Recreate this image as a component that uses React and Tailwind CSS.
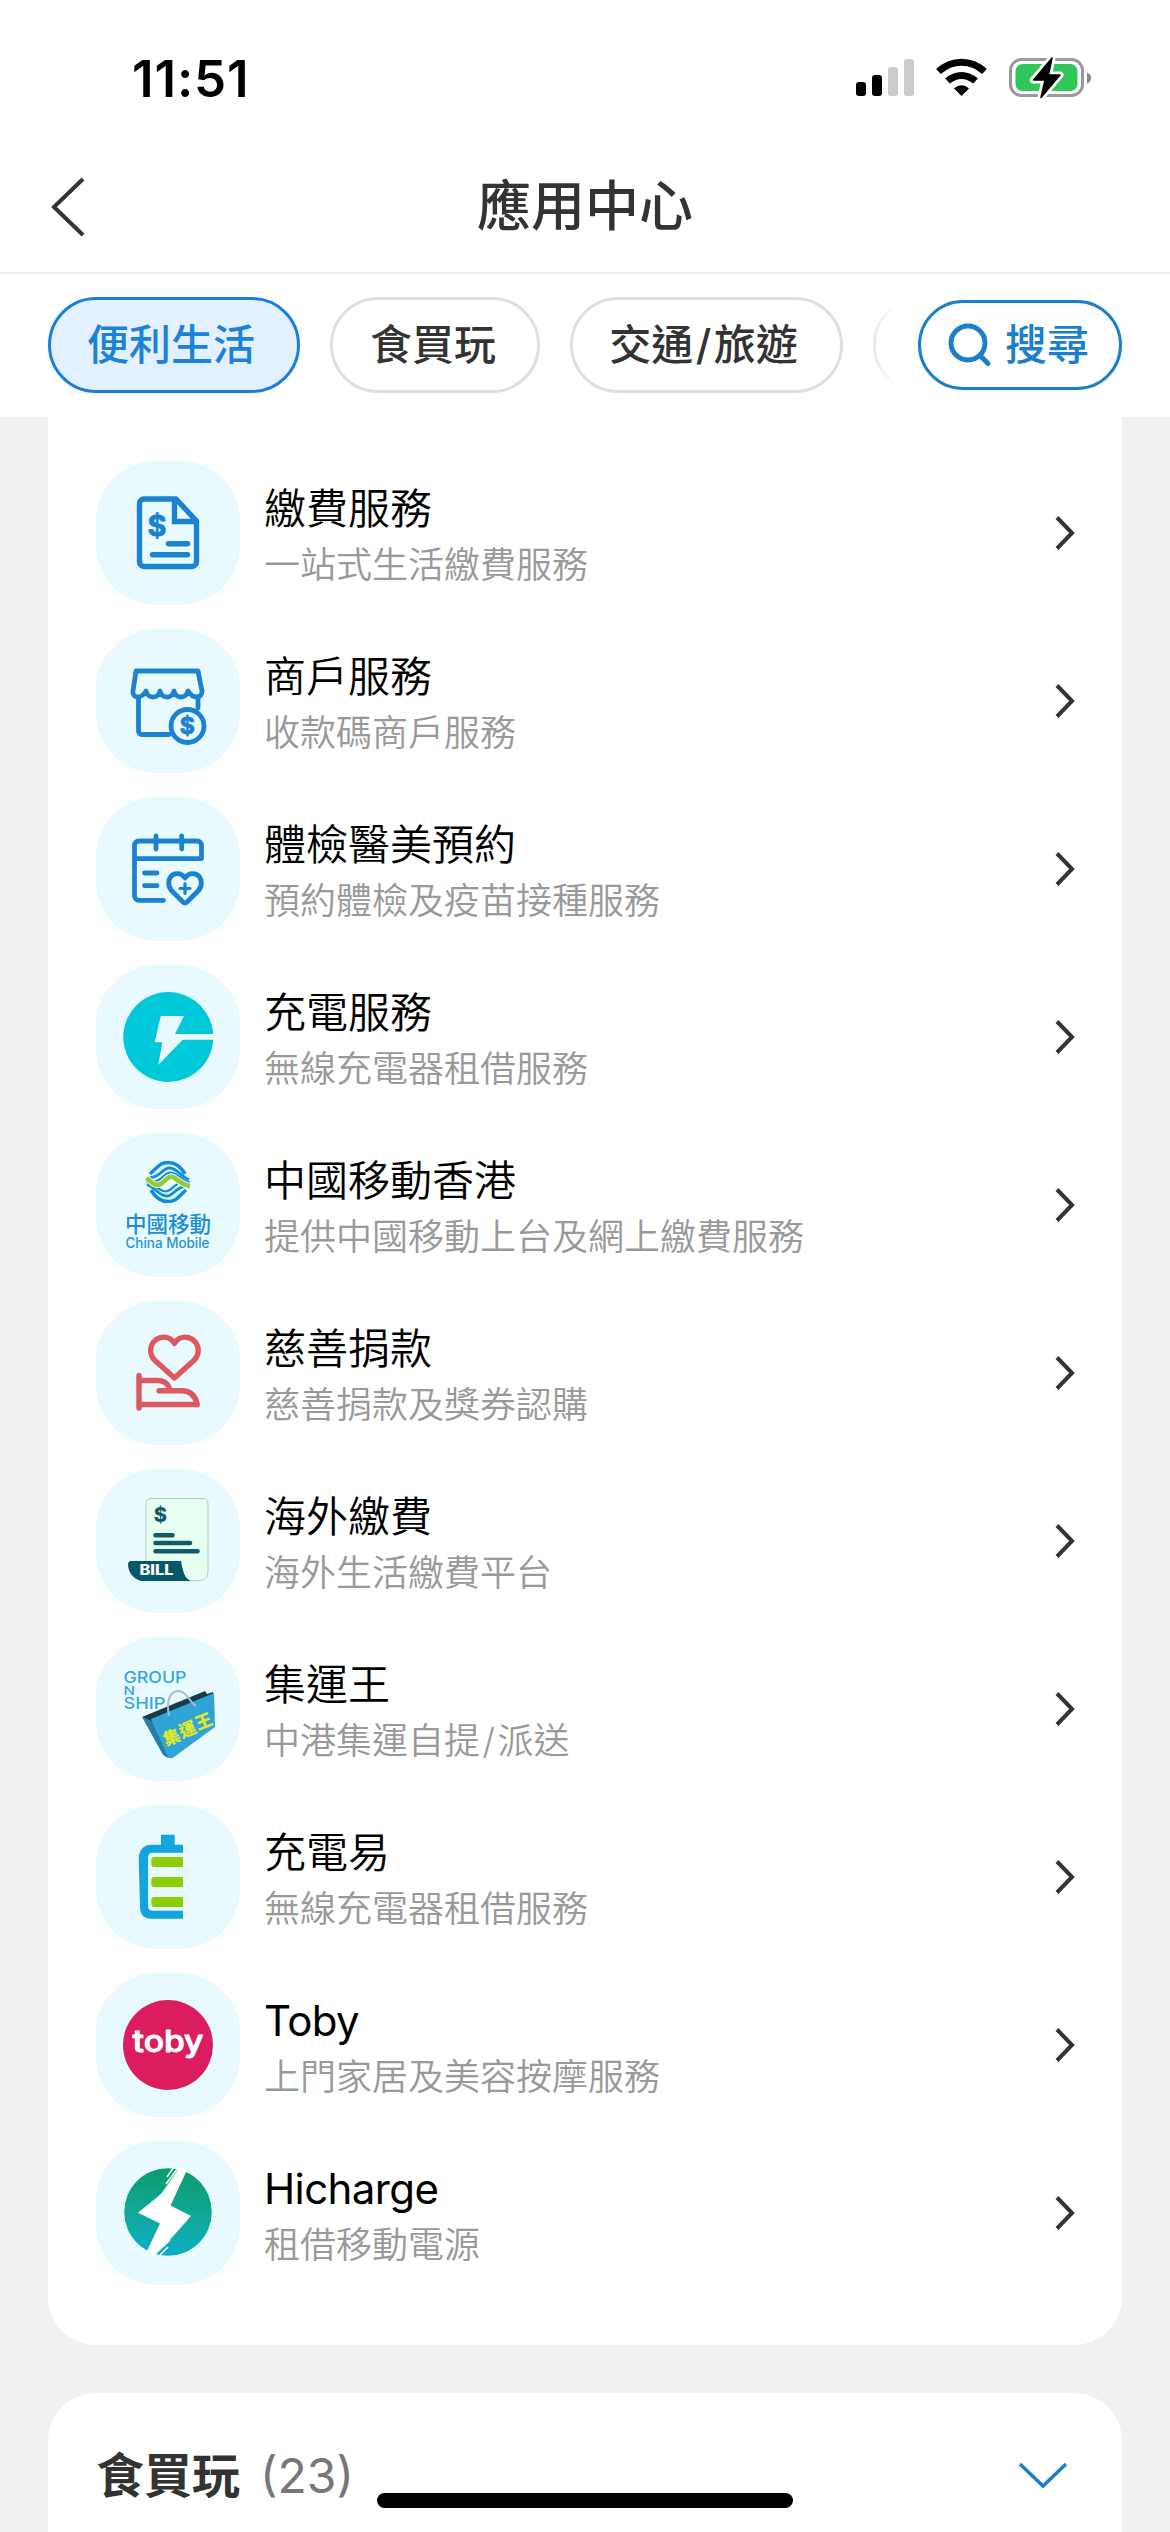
import React from 'react';

const BLUE = '#1b82d1';

const BillIcon = () => (
  <g fill="none" stroke={BLUE} strokeWidth="5.4" strokeLinecap="round" strokeLinejoin="round">
    <path d="M80 38H48a4.5 4.5 0 0 0-4.500 4.500V101a4.5 4.5 0 0 0 4.500 4.500H96a4.5 4.5 0 0 0 4.500-4.500V60L80 38Z" />
    <path d="M78.500 39V60.500H100" strokeLinejoin="miter" />
    <path d="M72.500 82.700H91.500M56.500 93.700H91.500" />
    <text x="61" y="74.500" textAnchor="middle" fontSize="29" fontWeight="700" fill={BLUE} strokeWidth="0.8">$</text>
  </g>
);

const ShopIcon = () => (
  <g fill="none" stroke={BLUE} strokeWidth="4.8" strokeLinecap="round" strokeLinejoin="round">
    <path d="M40 42H102L106 62C106 70 97 70 92 62C90 70 80 70 78 62C76 70 66 70 64 62C62 70 52 70 50 62C46 70 36 70 37 62L40 42Z" />
    <path d="M42.500 69V102a3.500 3.500 0 0 0 3.500 3.500H73M102 69V79" />
    <circle cx="91.500" cy="97" r="16.500" />
    <text x="91.300" y="105.200" textAnchor="middle" fontSize="23" fontWeight="700" fill={BLUE} strokeWidth="0.8">$</text>
  </g>
);

const CalendarIcon = () => (
  <g fill="none" stroke={BLUE} strokeWidth="4.8" strokeLinecap="round" strokeLinejoin="round">
    <path d="M67.500 103.300H43a4.5 4.5 0 0 1-4.500-4.500V48.500a4.5 4.5 0 0 1 4.500-4.500H101a4.5 4.5 0 0 1 4.500 4.500V61.700H39" />
    <path d="M60 39V52M85.700 39V52M48.500 76H61M48.500 88.700H61" />
    <path d="M89 81C84 73.500 73 76 72.700 86C72.600 89.500 74 92 76 94L87 105a3 3 0 0 0 4 0L102 94C104 92 105.400 89.500 105.300 86C105 76 94 73.500 89 81Z" />
    <path d="M89 86.500V96.500M84 91.500H94" strokeWidth="3.2" />
  </g>
);

const ChargeIcon = () => (
  <g>
    <circle cx="72.300" cy="72" r="45" fill="#00c8d8" />
    <path d="M64.700 51H88L79 69H119V74.700H86.700L62.300 100L66.300 77.300H58.700Z" fill="#e9faff" />
  </g>
);

// three strands above the green wave, repeated upside down below it
const MobileStrands = (props) => (
  <g fill="none" stroke="#0f8fd2" {...props}>
    <path d="M54 41C62 34 64 29.500 72 29.500C80 29.500 85 34 89 41" strokeWidth="3.6" />
    <path d="M54 44.500C64 45 66 35 73.500 35C81 35 84 43 93 46.500" strokeWidth="2.8" />
    <path d="M58 48.500C66 48 68 39.500 74.500 39.500C82 40 85 47 94 49.500" strokeWidth="2.2" />
  </g>
);

const ChinaMobileIcon = () => (
  <g>
    <MobileStrands />
    <MobileStrands transform="rotate(180 72 49)" />
    <path d="M50.500 45C57 51 60 54 66 50C71 46 73 42 78 44.500C83 48 87 52 94 53" fill="none" stroke="#e9faff" strokeWidth="6.5" />
    <path d="M50.500 45C57 51 60 54 66 50C71 46 73 42 78 44.500C83 48 87 52 94 53" fill="none" stroke="#98cb32" strokeWidth="4.6" />
    <text x="29" y="98.500" fontSize="21.500" fontWeight="500" fill="#1b8fd2">中國移動</text>
    <text x="29.500" y="114.800" textLength="84" lengthAdjust="spacingAndGlyphs" fontSize="14" fontWeight="500" fill="#2b93d3">China Mobile</text>
  </g>
);

const CharityIcon = () => (
  <g fill="none" stroke="#dc595f" strokeWidth="5.4" strokeLinecap="round" strokeLinejoin="round">
    <path d="M78.400 42.500C72 31.500 55 35.500 54.700 49.500C54.700 54 56.500 57 59 59.500L78.400 77L97.800 59.500C100.300 57 102.200 54 102.200 49.500C101.800 35.500 84.800 31.500 78.400 42.500Z" />
    <path d="M43 74.500V107M44 79.500H61C67 79.500 71 81.500 73 86M63 89.700H86C95 89.700 99.500 95 101.300 103.500H44" />
  </g>
);

const OverseasBillIcon = () => (
  <g>
    <path d="M55 29.500H107a5 5 0 0 1 5 5V102C112 109 108 111.700 101 111.700H90L50 97V34.500a5 5 0 0 1 5-5Z" fill="#e5fff1" stroke="#b3c9c5" strokeWidth="1" />
    <text x="64.300" y="53" textAnchor="middle" fontSize="20" fontWeight="800" fill="#14596a">$</text>
    <path d="M59.500 66.300H76.500M59.500 74H94M59.500 82.200H101.500" stroke="#14596a" strokeWidth="4.6" strokeLinecap="round" />
    <path d="M34 92H85C87 103 89 110 95 112H45C36 109 32 103 32 94Z" fill="#075866" />
    <text x="43.500" y="106.300" textLength="34" lengthAdjust="spacingAndGlyphs" fontSize="14" fontWeight="800" fill="#fff">BILL</text>
  </g>
);

const GroupShipIcon = () => (
  <g>
    <g fill="#38a6dc" fontSize="16" fontWeight="500">
      <text x="27.500" y="45.700" textLength="63" lengthAdjust="spacingAndGlyphs">GROUP</text>
      <text x="27.500" y="57.700" fontSize="11.500" textLength="11.500" lengthAdjust="spacingAndGlyphs">N</text>
      <text x="27.500" y="72.300" textLength="42" lengthAdjust="spacingAndGlyphs">SHIP</text>
    </g>
    <path d="M46 80L109 54L111 57L117 55V62L58 86Z" fill="#153c4b" />
    <path d="M46 80L56 84L75 121C70 121 67 118 66 116Z" fill="#237ea9" />
    <path d="M55 82L118 56L119 90L78 120C74 122.500 72 121 70.500 117Z" fill="#30a4d6" />
    <path d="M73 79C70 64 74 54 82 54C91 54 93 65 100 69" fill="none" stroke="#a5bdcd" strokeWidth="2" />
    <g fill="#dfe82e" fontSize="17" fontWeight="900" textAnchor="middle">
      <text transform="translate(78 106) rotate(-22)">集</text>
      <text transform="translate(94 98) rotate(-22)">運</text>
      <text transform="translate(110 90) rotate(-22)">王</text>
    </g>
  </g>
);

const PowerEasyIcon = () => (
  <g>
    <path d="M65 29.700H78.700V39.700H87V47.700H57C53.500 47.700 52 49.500 52 53V100C52 104 53.500 105.700 57 105.700H87V113.700H55C47 113.700 44 109 44 101L42.700 54C42.700 45 48 39.700 55 39.700H65Z" fill="#12a4dc" />
    <path d="M57 52H87V62H57L55.300 60V54ZM57 72H87V82H57L55.300 80V74ZM57 92H87V102H57L55.300 100V94Z" fill="#8bce06" />
  </g>
);

const TobyIcon = () => (
  <g>
    <circle cx="72" cy="72" r="45" fill="#db1d5f" />
    <text x="36.500" y="78.700" textLength="71" lengthAdjust="spacingAndGlyphs" fontSize="30" fontWeight="500" fill="#fff" stroke="#fff" strokeWidth="1" strokeLinejoin="round">toby</text>
  </g>
);

const HichargeIcon = () => (
  <g>
    <defs>
      <linearGradient id="hicharge" x1="0.6" y1="0" x2="0.5" y2="1">
        <stop offset="0" stopColor="#0b9b6a" />
        <stop offset="0.5" stopColor="#12a796" />
        <stop offset="1" stopColor="#0bb0c6" />
      </linearGradient>
    </defs>
    <circle cx="72" cy="71" r="43.800" fill="url(#hicharge)" />
    <path d="M84 26L91 29L74.500 64.500L95 75L72 101L57 115L51 110L64 82.500L42 71.700L65 53Z" fill="#fff" />
    <path d="M82 27L70 43M78 26L71 36M58 114L74 99M64 114L72 106" stroke="#fff" strokeWidth="1.5" />
  </g>
);

const services = [
  { name: '繳費服務', description: '一站式生活繳費服務', Icon: BillIcon },
  { name: '商戶服務', description: '收款碼商戶服務', Icon: ShopIcon },
  { name: '體檢醫美預約', description: '預約體檢及疫苗接種服務', Icon: CalendarIcon },
  { name: '充電服務', description: '無線充電器租借服務', Icon: ChargeIcon },
  { name: '中國移動香港', description: '提供中國移動上台及網上繳費服務', Icon: ChinaMobileIcon },
  { name: '慈善捐款', description: '慈善捐款及獎券認購', Icon: CharityIcon },
  { name: '海外繳費', description: '海外生活繳費平台', Icon: OverseasBillIcon },
  { name: '集運王', description: '中港集運自提/派送', Icon: GroupShipIcon },
  { name: '充電易', description: '無線充電器租借服務', Icon: PowerEasyIcon },
  { name: 'Toby', description: '上門家居及美容按摩服務', Icon: TobyIcon, latin: true },
  { name: 'Hicharge', description: '租借移動電源', Icon: HichargeIcon, latin: true },
];

// the slash is set a little wider than the font draws it
const spaceSlash = (text) =>
  text.split(/(\/)/).map((part, i) =>
    part === '/' ? <span key={i} className="px-[2.5px]">/</span> : part
  );

const StatusBar = () => (
  <div className="flex h-[141px] shrink-0 items-start justify-between pt-[54px] pr-[78px] pl-[132px]">
    <span className="text-[51px] leading-[50px] font-semibold tracking-[0.9px] text-black">11:51</span>
    <svg width="236" height="48" viewBox="856 54 236 48">
      <rect x="856" y="82" width="10" height="14" rx="3" />
      <rect x="872" y="75" width="10" height="21" rx="3" />
      <rect x="888" y="67" width="10" height="29" rx="3" fill="#ccc" />
      <rect x="904" y="59" width="10" height="37" rx="3" fill="#ccc" />
      <path d="M938.500 71.500C952 59 971 59 984.500 71.500" fill="none" stroke="#000" strokeWidth="7" />
      <path d="M947.500 81C956 73.500 967 73.500 975.500 81" fill="none" stroke="#000" strokeWidth="7" />
      <path d="M954 88.500C958.500 84 964.500 84 969 88.500L961.500 96Z" />
      <rect x="1010.500" y="59.500" width="72" height="36" rx="11" fill="#fff" stroke="#999" strokeWidth="3" />
      <rect x="1015.500" y="64" width="62" height="27" rx="7" fill="#30c759" />
      <path d="M1087 72.500C1092.500 74.500 1092.500 81.500 1087 83.500Z" fill="#888" />
      <path d="M1052 58L1033.500 80H1045L1041 97.500L1060 75H1048.500Z" stroke="#fff" strokeWidth="7" strokeLinejoin="round" />
      <path d="M1052 58L1033.500 80H1045L1041 97.500L1060 75H1048.500Z" stroke="#000" strokeWidth="1.5" strokeLinejoin="round" />
    </svg>
  </div>
);

const NavBar = () => (
  <div className="flex h-[133px] shrink-0 items-center border-b-2 border-[#f0f0f0] px-12">
    <svg width="40" height="64" viewBox="0 0 40 64" fill="none" stroke="#333" strokeWidth="4">
      <path d="M35 4L6 32L35 60" />
    </svg>
    <h1 className="mr-10 flex-1 text-center text-[54px] leading-[60px] font-medium text-[#333]">應用中心</h1>
  </div>
);

const FilterBar = () => (
  <div className="flex h-[143px] shrink-0 items-center justify-between px-12 pb-px">
    <div className="relative flex w-[850px] gap-[30px] overflow-hidden text-[42px] leading-[60px] font-medium whitespace-nowrap">
      <button className="h-24 w-[252px] shrink-0 rounded-full border-3 border-[#1a7fdb] bg-[#e3f0ff] pr-1.5 text-[#1b82d8]">便利生活</button>
      <button className="h-24 w-[210px] shrink-0 rounded-full border-3 border-[#dfdfdf] pr-1 text-[#333]">食買玩</button>
      <button className="h-24 w-[273px] shrink-0 rounded-full border-3 border-[#dfdfdf] pr-1.5 text-[#333]">{spaceSlash('交通/旅遊')}</button>
      <div className="h-24 w-[210px] shrink-0 rounded-full border-3 border-[#dfdfdf]" />
      <div className="absolute top-0 right-0 h-full w-9 bg-gradient-to-r from-transparent to-white" />
    </div>
    <button className="flex h-[90px] w-[204px] items-center justify-center gap-3 rounded-full border-3 border-[#1b7fc9] pr-1 text-[42px] leading-[60px] font-medium text-[#1b7fc9]">
      <svg width="46" height="46" viewBox="0 0 46 46" fill="none" stroke="#1b7fc9" strokeWidth="5" strokeLinecap="round">
        <circle cx="21" cy="21" r="17" />
        <path d="M33.500 34L41 41.500" />
      </svg>
      搜尋
    </button>
  </div>
);

const ServiceRow = ({ name, description, Icon, latin }) => (
  <li className="flex h-36 items-center">
    <svg className="shrink-0 rounded-[60px] bg-[#e9faff]" width="144" height="144" viewBox="0 0 144 144">
      <Icon />
    </svg>
    <div className="ml-6 flex-1 pt-1">
      <p className={`text-[42px] leading-[60px] text-black ${latin ? 'font-normal tracking-[-0.6px]' : 'font-[350]'}`}>{name}</p>
      <p className="text-[36px] leading-[52px] font-[350] text-[#999]">{spaceSlash(description)}</p>
    </div>
    <svg className="-mr-[3px]" width="24" height="40" viewBox="0 0 24 40" fill="none" stroke="#333" strokeWidth="4">
      <path d="M4 4.500L19 20L4 35.500" />
    </svg>
  </li>
);

export default function App() {
  return (
    <div className="relative flex h-[2532px] w-[1170px] flex-col overflow-hidden bg-white font-['Inter','Noto_Sans_CJK_TC',sans-serif]">
      <StatusBar />
      <NavBar />
      <FilterBar />
      <main className="flex flex-1 flex-col gap-12 bg-[#f1f1f1] px-12">
        <section className="shrink-0 rounded-b-[48px] bg-white px-12 pt-11 pb-[60px]">
          <ul className="flex flex-col gap-6">
            {services.map((service) => (
              <ServiceRow key={service.name} {...service} />
            ))}
          </ul>
        </section>
        <section className="h-[139px] shrink-0 rounded-t-[48px] bg-white px-12">
          <div className="flex h-[166px] items-center justify-between">
            <h2 className="text-[48px] leading-[64px] font-bold text-[#333]">
              食買玩<span className="ml-5 text-[48px] font-normal text-[#777]">(23)</span>
            </h2>
            <svg className="mr-1.5" width="50" height="30" viewBox="0 0 50 30" fill="none" stroke="#1b7fc9" strokeWidth="3.5">
              <path d="M2 3L25 25L48 3" />
            </svg>
          </div>
        </section>
      </main>
      <div className="absolute bottom-6 left-[377px] h-[15px] w-[416px] rounded-full bg-black" />
    </div>
  );
}
